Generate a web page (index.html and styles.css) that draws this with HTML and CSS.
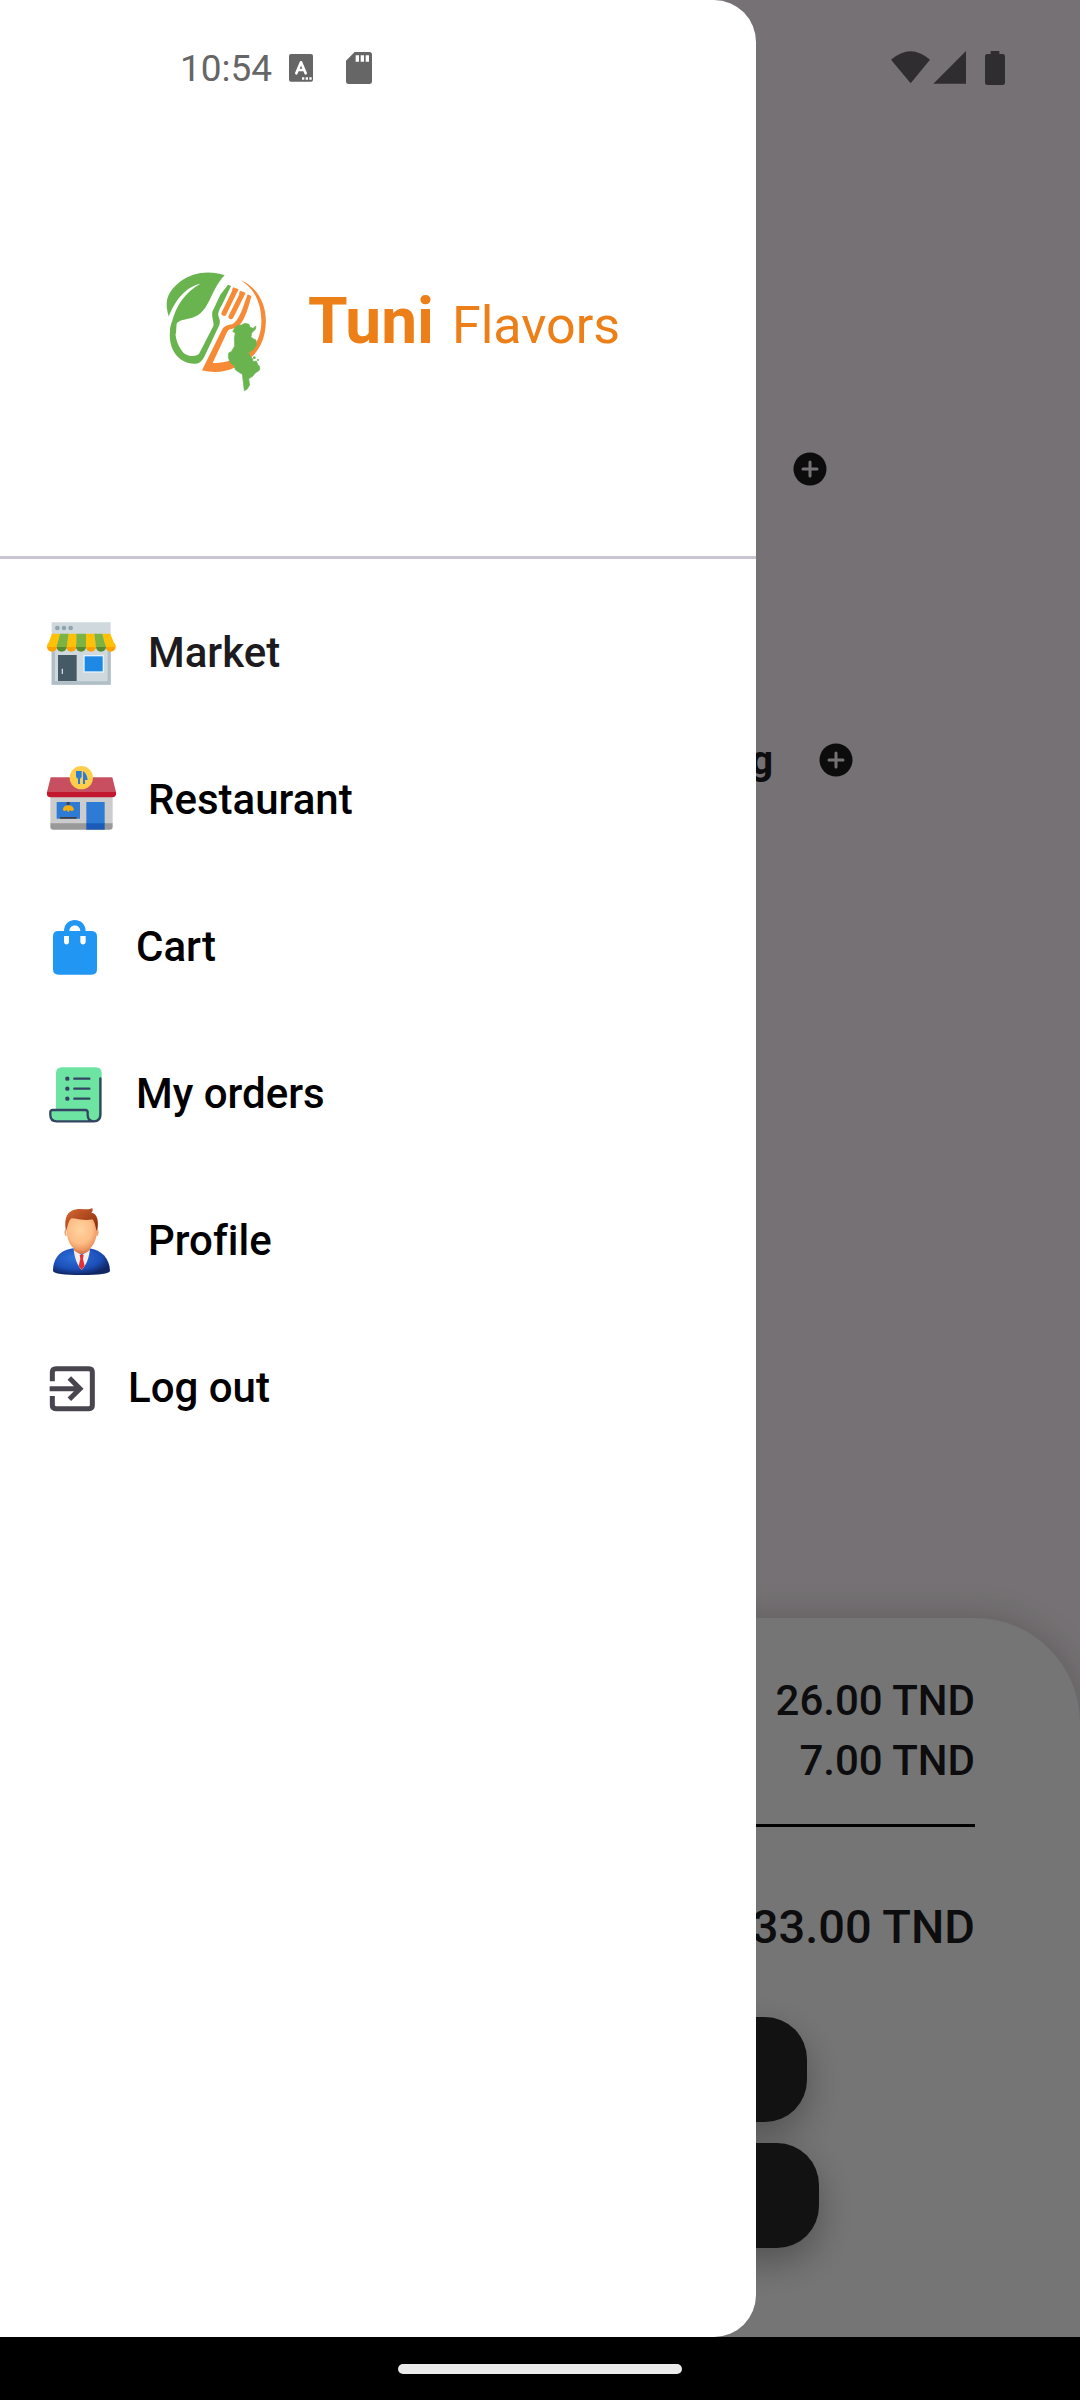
FILE: index.html
```html
<!DOCTYPE html>
<html lang="en">
<head>
<meta charset="utf-8">
<meta name="viewport" content="width=device-width, initial-scale=1">
<title>Tuni Flavors</title>
<link rel="stylesheet" href="styles.css">
</head>
<body>
<div class="app">
  <div class="stage">
    <main class="page">
      <section class="items">
        <div class="item item-first">
          <button class="add" type="button" aria-label="Add one">
            <svg viewBox="0 0 34 34"><circle cx="17" cy="17" r="16.5"/><path d="M17 10v14M10 17h14"/></svg>
          </button>
        </div>
        <div class="item item-second">
          <span class="item-name">g</span>
          <button class="add" type="button" aria-label="Add one">
            <svg viewBox="0 0 34 34"><circle cx="17" cy="17" r="16.5"/><path d="M17 10v14M10 17h14"/></svg>
          </button>
        </div>
      </section>
      <section class="summary">
        <p class="amount">26.00 TND</p>
        <p class="amount">7.00 TND</p>
        <hr class="rule">
        <p class="amount total">33.00 TND</p>
        <div class="actions">
          <button class="action" type="button" aria-label="Confirm"></button>
          <button class="action action-wide" type="button" aria-label="Continue"></button>
        </div>
      </section>
    </main>
    <div class="scrim"></div>
    <aside class="drawer">
      <header class="brand">
        <svg class="logo" viewBox="30 -12 360 450" aria-hidden="true">
          <path fill="#6ab450" d="M57 202C43 160 50 132 78 106C115 70 172 58 224 76C198 102 188 135 172 163C155 195 135 203 108 208C92 211 84 215 79 222C71 250 80 285 100 308C114 320 140 322 148 310L190 228C193 215 184 205 187 185L211 134L234 104L243 108L219 158C212 172 203 185 205 197C208 207 212 212 208 225L163 320C152 342 138 344 115 339C80 328 56 295 60 245Z"/>
          <path fill="#fff" d="M54 205C73 155 103 112 151 101C105 128 80 163 66 215L58 250L50 225Z"/>
          <path fill="#6ab450" d="M66 215C61 226 59 240 60 262L78 250L80 218Z"/>
          <g stroke="#f68a36" stroke-linecap="round" stroke-width="15"><path d="M254 124L222 190M276 134L243 200"/></g>
          <path fill="#f68a36" d="M249 112L266 118L262 126L246 121ZM270 122L287 128L282 137L267 131ZM293 133L304 138C299 158 294 180 282 205C272 225 263 235 240 238Q234 240 231 247L188 339C205 340 225 338 242 331L256 352C222 369 187 369 156 361L217 238C222 228 234 225 246 223C258 218 268 200 276 180ZM270 90C325 110 352 170 347 225C344 270 327 302 302 323L293 312C325 280 335 245 334 210C333 162 315 115 270 90Z"/>
          <path fill="#6ab450" stroke="#6ab450" stroke-width="2" stroke-linejoin="round" d="M250 241L257 230L264 226L274 225L285 220L297 223L300 232L309 235L318 228L316 238L305 249L303 260L309 266L318 270L319 285L311 298L296 308L300 317L308 327L309 335L319 333L324 345L329 349V360L315 370L308 379L296 386L299 405L291 418L283 422L277 373L267 367L256 359L253 348L240 337L235 322L236 309L245 304L254 288L253 263L256 250L248 244Z"/>
          <g fill="#6ab450"><circle cx="313" cy="323" r="4"/><circle cx="324" cy="330" r="3"/></g>
        </svg>
        <h1 class="wordmark"><span class="wordmark-bold">Tuni</span><span class="wordmark-light">Flavors</span></h1>
      </header>
      <nav class="menu">
        <a class="link link-soft" href="#market">
          <svg class="icon icon-large" viewBox="36 63 252 252" aria-hidden="true">
            <path fill="#cfd8dd" d="M65 97H242V284H65Z"/><path fill="#b0bec5" d="M65 184H75V274H233V184H242V284H65Z"/>
            <g fill="#90a4ae"><circle cx="82" cy="114" r="7"/><circle cx="102" cy="114" r="7"/><circle cx="122" cy="114" r="7"/></g>
            <path fill="#455a64" d="M84 195H140V273H84Z"/><path fill="#cfd8dc" d="M95 236H99V252H95Z"/>
            <path fill="#e3f2fd" d="M160 195H222V248H160Z"/><path fill="#1e88e5" d="M164 199H218V244H164Z"/>
            <g fill="#ffa000"><circle cx="66" cy="170" r="15"/><circle cx="124" cy="170" r="15"/><circle cx="183" cy="170" r="15"/><circle cx="242" cy="170" r="15"/></g>
            <g fill="#558b2f"><circle cx="95" cy="170" r="15"/><circle cx="153" cy="170" r="15"/><circle cx="213" cy="170" r="15"/></g>
            <path fill="#ffc107" d="M66 131H90L80 171H51ZM116 131H139V171H110ZM168 131H193L198 171H168ZM217 131H241L257 171H227Z"/>
            <path fill="#7cb342" d="M90 131H116L110 171H80ZM139 131H168V171H139ZM193 131H217L227 171H198Z"/>
          </svg>
          <span>Market</span>
        </a>
        <a class="link" href="#restaurant">
          <svg class="icon icon-large" viewBox="36 504 252 252" aria-hidden="true">
            <path fill="#ccc" d="M61 612H248V702H61Z"/><path fill="#999" d="M61 700H248V710Q248 719 239 719H70Q61 719 61 710Z"/>
            <path fill="#2e7bd6" d="M80 636H150V686H80ZM169 636H224V702H169Z"/><path fill="#1b5ab8" d="M169 700H224V719H169Z"/>
            <path fill="#404040" d="M110 636H119V645H110ZM90 681H140V686H90Z"/><path fill="#f2ae12" d="M98 659Q101 646 115 646Q129 646 132 659Q125 666 120 660L115 667L110 660Q104 666 98 659Z"/>
            <path fill="#c84f60" d="M62 562H247L258 606H51Z"/><path fill="#c2172f" d="M51 606H258V613Q257 622 247 622H62Q51 622 51 613Z"/>
            <circle cx="154" cy="563" r="35" fill="#ffcf4b"/>
            <path fill="#2e7bd6" d="M138 543H155V559Q155 564 150 566V582H144V566Q138 564 138 559ZM159 543C168 548 172 560 173 570H165V582H159Z"/>
          </svg>
          <span>Restaurant</span>
        </a>
        <a class="link" href="#cart">
          <svg class="icon icon-medium" viewBox="36 63 216 216" aria-hidden="true">
            <path fill="#2196f3" fill-rule="evenodd" d="M102 123C103 79 166 79 167 123H185Q201 124 201 139V238Q201 254 185 254H85Q69 254 69 238V139Q69 123 85 123ZM118 123H151C150 101 119 101 118 123ZM102 138V155C102 166 117 166 117 155V138ZM151 138V155C151 166 167 166 167 155V138Z"/>
          </svg>
          <span>Cart</span>
        </a>
        <a class="link" href="#orders">
          <svg class="icon icon-medium" viewBox="36 504 216 216" aria-hidden="true">
            <path fill="#6de4a2" d="M78 660V550Q78 532 96 532H197Q215 532 215 550V675Q215 696 194 696H80Q60 696 60 675V665Q60 660 68 660Z"/>
            <g fill="none" stroke="#344563" stroke-width="7" stroke-linecap="round" stroke-linejoin="round"><path d="M211 565V673Q211 694 192 694Q173 694 173 675V667Q173 660 166 660H68Q61 660 61 667V675Q61 694 80 694H192M133 566H178M133 596H178M133 626H178"/></g>
            <g fill="#344563"><circle cx="112" cy="566" r="6.500"/><circle cx="112" cy="596" r="6.500"/><circle cx="112" cy="626" r="6.500"/></g>
          </svg>
          <span>My orders</span>
        </a>
        <a class="link" href="#profile">
          <svg class="icon icon-large" viewBox="36 57 252 252" aria-hidden="true">
            <defs>
              <radialGradient id="face" cx=".45" cy=".4" r=".65"><stop offset="0" stop-color="#ffd3a0"/><stop offset=".6" stop-color="#fdbd86"/><stop offset="1" stop-color="#e58550"/></radialGradient>
              <radialGradient id="suit" cx=".4" cy=".35" r=".65"><stop offset="0" stop-color="#2d72dc"/><stop offset=".65" stop-color="#1d4fb9"/><stop offset="1" stop-color="#102766"/></radialGradient>
              <linearGradient id="hair" x2="1" y2="1"><stop offset="0" stop-color="#d96a35"/><stop offset="1" stop-color="#852708"/></linearGradient>
            </defs>
            <path fill="url(#suit)" d="M69 273C69 230 96 208 132 205H178C215 210 239 236 240 273Q236 285 155 285Q73 285 69 273Z"/>
            <path fill="#f3eeee" d="M131 206L155 226L180 206C178 235 167 257 155 270C143 257 133 235 131 206Z"/>
            <path fill="#da8050" d="M132 195H179V211Q167 222 155 222Q143 222 132 211Z"/>
            <path fill="#e23137" d="M149 224H161L159 237L164 258L155 270L146 258L151 237Z"/>
            <path fill="#eea069" d="M107 148C101 151 103 168 110 169ZM203 148C208 151 207 168 199 169Z"/>
            <path fill="url(#face)" d="M109 138C108 105 130 105 155 107C181 105 202 108 202 140C202 180 188 213 155 213C123 213 109 180 109 138Z"/>
            <path fill="url(#hair)" d="M108 154C101 115 111 92 140 88C158 84 174 92 187 84Q190 93 184 98C202 99 208 124 201 154C196 142 195 125 187 118C166 123 142 116 124 115C115 122 113 140 108 154Z"/>
          </svg>
          <span>Profile</span>
        </a>
        <a class="link" href="#logout">
          <svg class="icon icon-small" viewBox="36 528 192 192" aria-hidden="true">
            <path fill="none" stroke="#49454f" stroke-width="15" d="M67 604V577Q67 566 78 566H177Q187 566 187 577V676Q187 686 177 686H78Q67 686 67 676V648M59 626H151M118 594L150 626L118 658"/>
          </svg>
          <span>Log out</span>
        </a>
      </nav>
    </aside>
    <div class="status">
      <div class="status-left">
        <time class="clock">10:54</time>
        <svg class="badge-icon" viewBox="417 72 72 84" aria-hidden="true"><rect x="417" y="72" width="72" height="83" rx="6" fill="#666"/><path d="M439 130L453 97L467 130M444 120H462" fill="none" stroke="#fff" stroke-width="8" stroke-linecap="round" stroke-linejoin="round"/><path fill="#fff" d="M456 142h7v7h-7zM467 142h7v7h-7zM478 142h7v7h-7z"/></svg>
        <svg class="card-icon" viewBox="588 66 78 96" aria-hidden="true"><path fill="#666" fill-rule="evenodd" d="M614 66H658Q666 66 666 74V154Q666 162 658 162H596Q588 162 588 154V92ZM617 76V95H627V76ZM632 76V95H642V76ZM647 76V95H657V76Z"/></svg>
      </div>
      <svg class="signals" viewBox="93 60 342 108" aria-hidden="true"><path fill="#302d30" d="M93 89Q152 38 210 89L152 160ZM220 161L318 63V161ZM392 63H418V72H428Q435 72 435 79V158Q435 165 428 165H382Q375 165 375 158V79Q375 72 382 72H392Z"/></svg>
    </div>
  </div>
  <footer class="system-bar"><span class="handle"></span></footer>
</div>
</body>
</html>
```
FILE: styles.css
```css
* {
  box-sizing: border-box;
}

body {
  margin: 0;
  font-family: Roboto, "Liberation Sans", sans-serif;
  font-weight: 500;
  font-size: 42px;
  font-variant-ligatures: none;
  color: #000;
}

p,
h1 {
  margin: 0;
}

button {
  border: 0;
  padding: 0;
  background: none;
}

svg {
  display: block;
  flex: none;
}

.app {
  display: flex;
  flex-direction: column;
  min-height: 100vh;
}

.stage {
  position: relative;
  display: flex;
  flex: 1;
  overflow: hidden;
}

/* Cart page behind the drawer */
.page {
  display: flex;
  flex: 1;
  flex-direction: column;
  justify-content: space-between;
  background: #fff7fc;
  color: #1d1b20;
}

.items {
  display: flex;
  flex-direction: column;
  gap: 231px;
  padding-top: 439px;
}

.item {
  display: flex;
  align-items: center;
  justify-content: flex-end;
  gap: 46px;
  height: 60px;
}

.item-first {
  padding-right: 253px;
}

.item-second {
  padding-right: 227px;
}

.item-name {
  font-size: 40px;
  font-weight: 700;
}

.add svg {
  width: 34px;
  height: 34px;
  fill: #1d1b1b;
  stroke: none;
}

.add path {
  stroke: #fff7fc;
  stroke-width: 3;
  stroke-linecap: round;
}

.summary {
  padding: 53px 105px 89px;
  border-radius: 105px 105px 0 0;
  background: #fff;
  box-shadow: 0 0 32px 4px rgba(0, 0, 0, 0.16);
}

.amount {
  line-height: 60px;
  text-align: right;
}

.rule {
  height: 3px;
  margin: 33px 0 70px;
  border: 0;
  background: #000;
}

.total {
  font-size: 47px;
}

.actions {
  display: flex;
  flex-direction: column;
  align-items: center;
  gap: 21px;
  margin-top: 60px;
}

.action {
  width: 534px;
  height: 105px;
  border-radius: 42px;
  background: #292929;
  box-shadow: 0 14px 36px rgba(0, 0, 0, 0.3);
}

.action-wide {
  width: 558px;
}

.scrim {
  position: absolute;
  inset: 0;
  background: rgba(0, 0, 0, 0.54);
}

/* Navigation drawer */
.drawer {
  position: absolute;
  inset: 0 30% 0 0;
  border-radius: 0 42px 42px 0;
  background: #fff;
}

.brand {
  display: flex;
  align-items: center;
  gap: 28px;
  height: 559px;
  padding: 86px 0 0 160px;
  border-bottom: 3px solid #cac4d0;
}

.logo {
  width: 120px;
  height: 150px;
}

.wordmark {
  display: flex;
  align-items: baseline;
  gap: 18px;
  color: #ec7f17;
}

.wordmark-bold {
  font-size: 64px;
  font-weight: 700;
}

.wordmark-light {
  font-size: 52px;
  font-weight: 400;
}

.menu {
  padding-top: 20px;
}

.link {
  display: flex;
  align-items: center;
  gap: 22px;
  height: 147px;
  padding-left: 42px;
  color: #000;
  text-decoration: none;
}

.link-soft {
  color: #1d1b20;
}

.icon-large {
  width: 84px;
  height: 84px;
}

.icon-medium {
  width: 72px;
  height: 72px;
}

.icon-small {
  width: 64px;
  height: 64px;
}

/* System chrome */
.status {
  position: absolute;
  inset: 0 0 auto;
  display: flex;
  align-items: center;
  justify-content: space-between;
  height: 136px;
  padding: 0 75px 0 180px;
}

.status-left {
  display: flex;
  align-items: center;
}

.clock {
  font-size: 37px;
  font-weight: 400;
  color: #666;
}

.badge-icon {
  width: 24px;
  height: 28px;
  margin-left: 17px;
}

.card-icon {
  width: 26px;
  height: 32px;
  margin-left: 33px;
}

.signals {
  width: 114px;
  height: 36px;
}

.system-bar {
  display: flex;
  align-items: center;
  justify-content: center;
  height: 63px;
  background: #000;
}

.handle {
  width: 284px;
  height: 10px;
  border-radius: 5px;
  background: #ebebeb;
}
```
